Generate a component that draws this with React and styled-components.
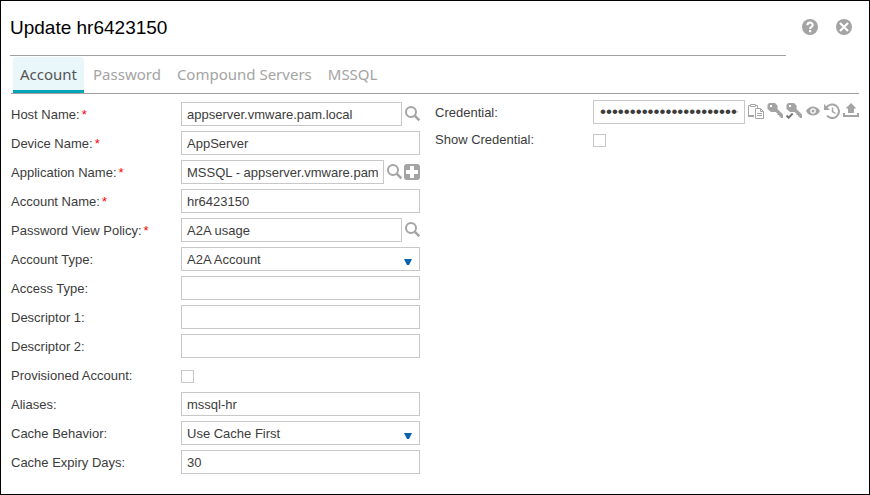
import React from "react";
import styled, { createGlobalStyle } from "styled-components";

const GlobalStyle = createGlobalStyle`
  *, *::before, *::after { box-sizing: border-box; }
  body {
    margin: 0;
    background: #fff;
    color: #3c3c3c;
    font: 13px/16px "Liberation Sans", Arial, sans-serif;
  }
`;

const ICON = "#a4a4a4";

const Dialog = styled.main`
  min-height: 100vh;
  padding: 0 10px 20px;
  border: 1px solid #000;
`;

const Header = styled.header`
  display: flex;
  justify-content: space-between;
  height: 55px;
`;

const Title = styled.h1`
  flex: 1;
  margin: 0 0 0 -1px;
  padding-top: 15px;
  border-bottom: 1px solid #a0a0a0;
  color: #000;
  font-size: 19px;
  font-weight: 400;
  line-height: 24px;
`;

const HeaderActions = styled.div`
  display: flex;
  gap: 18px;
  padding: 18px 7px 0 16px;
`;

const IconButton = styled.button`
  display: block;
  flex: none;
  width: 16px;
  height: 16px;
  padding: 0;
  border: 0;
  background: none;
  color: ${ICON};
  cursor: pointer;

  svg { display: block; }
`;

const Tabs = styled.div`
  display: flex;
  gap: 2px;
  height: 38px;
  padding: 1px 2px 0;
  border-bottom: 1px solid #a0a0a0;
`;

const Tab = styled.button`
  padding: 1px 7px 0;
  border: 0;
  border-bottom: 3px solid ${(p) => (p.$active ? "#00a5b8" : "transparent")};
  border-radius: 3px 3px 0 0;
  background: ${(p) => (p.$active ? "#e9f7fa" : "transparent")};
  color: ${(p) => (p.$active ? "#555" : "#a4a4a4")};
  font: 15px/22px "Noto Sans", "Open Sans", sans-serif;
  cursor: pointer;
`;

const Form = styled.form`
  display: grid;
  grid-template-columns: minmax(0, 409fr) minmax(0, 424fr);
  column-gap: 15px;
`;

const Column = styled.div`
  display: flex;
  flex-direction: column;
  gap: ${(p) => p.$gap}px;
  padding-top: ${(p) => p.$top}px;
`;

const Row = styled.div`
  display: grid;
  grid-template-columns: ${(p) => p.$label}px minmax(0, 1fr);
  align-items: center;
  height: 24px;
`;

const Label = styled.label`
  padding-top: 2px;
  white-space: nowrap;
`;

const Required = styled.span`
  margin-left: 2px;
  color: #f00;
`;

const Field = styled.div`
  display: flex;
  align-items: center;
  gap: 2px;
`;

const TextInput = styled.input`
  flex: 1;
  min-width: 0;
  height: 24px;
  padding: 0 5px;
  border: 1px solid #c8c8c8;
  border-radius: 0;
  background: #fff;
  color: #3c3c3c;
  font: inherit;

  &[type="password"] { padding: 0 6px; font-size: 17px; }
`;

const SelectBox = styled.div`
  position: relative;
  flex: 1;

  svg {
    position: absolute;
    right: 8px;
    top: 12px;
    pointer-events: none;
  }
`;

const Select = styled.select`
  display: block;
  width: 100%;
  height: 24px;
  padding: 2px 24px 0 5px;
  border: 1px solid #c8c8c8;
  border-radius: 0;
  appearance: none;
  background: #fff;
  color: #3c3c3c;
  font: inherit;
`;

const Checkbox = styled.input`
  appearance: none;
  width: 13px;
  height: 13px;
  margin: 2px 0 0;
  border: 1px solid #c8c8c8;
  background: #fff;

  &:checked { background: #00a5b8; }
`;

const Tools = styled.div`
  display: flex;
  gap: 3px;
  margin-left: 1px;
  margin-bottom: 2px;
`;

const Svg = ({ children }) => (
  <svg width="16" height="16" viewBox="0 0 16 16" fill="none" aria-hidden="true">
    {children}
  </svg>
);

const HelpIcon = () => (
  <Svg>
    <circle cx="8" cy="8" r="8" fill="currentColor" />
    <path d="M5.400 6.300C5.400 2.700 10.700 2.800 10.700 6c0 2-2.600 1.900-2.600 4" stroke="#fff" strokeWidth="2.100" />
    <path d="M7 11h2.200v2.200H7z" fill="#fff" />
  </Svg>
);

const CloseIcon = () => (
  <Svg>
    <circle cx="8" cy="8" r="8" fill="currentColor" />
    <path d="M4 4l8 8M12 4l-8 8" stroke="#fff" strokeWidth="2.200" />
  </Svg>
);

const SearchIcon = () => (
  <Svg>
    <circle cx="7" cy="6" r="5" stroke="currentColor" strokeWidth="2" />
    <path d="M10.700 9.700l4.600 4.600" stroke="currentColor" strokeWidth="2.400" />
  </Svg>
);

const PlusIcon = () => (
  <Svg>
    <rect width="16" height="16" rx="3" fill="currentColor" />
    <path d="M6 2h4v4h4v4h-4v4H6v-4H2V6h4z" fill="#fff" />
  </Svg>
);

const PasteIcon = () => (
  <Svg>
    <path d="M6 13H.5V2.5h9V5" stroke="currentColor" />
    <path d="M0 12h6v2H0z" fill="currentColor" />
    <path d="M2.500 1.500h5v2h-5z" fill="#fff" stroke="currentColor" />
    <path d="M7.500 5.500h5l3 3v7h-8z" fill="#fff" stroke="currentColor" />
    <path d="M12.500 5.500v3h3M9 10.500h5M9 12.500h5" stroke="currentColor" />
  </Svg>
);

const KeyShape = () => (
  <>
    <path
      d="M2 0h6l2.500 2.500v3.500L16 11.500V15h-2.500v-1.500H12V12h-1.500v-1.500L8.500 9H4L.5 6V2z"
      fill="currentColor"
    />
    <path d="M3 2h2v2H3z" fill="#fff" />
  </>
);

const KeyIcon = () => (
  <Svg>
    <KeyShape />
  </Svg>
);

const KeyCheckIcon = () => (
  <Svg>
    <KeyShape />
    <path d="M.5 12.500l2.200 2.200 4-4.200" stroke="#777" strokeWidth="2" />
  </Svg>
);

const EyeIcon = () => (
  <Svg>
    <path d="M1 8C4 2 12 2 15 8 12 14 4 14 1 8z" fill="currentColor" />
    <circle cx="8" cy="8" r="2.800" fill="#fff" />
    <circle cx="8" cy="8" r="1.500" fill="currentColor" />
  </Svg>
);

const HistoryIcon = () => (
  <Svg>
    <path d="M2.200 5A6.800 6.800 0 1 1 3 12.700" stroke="currentColor" strokeWidth="2" />
    <path d="M0 1v6h6z" fill="currentColor" />
    <path d="M8.500 4.500v4l3 2" stroke="currentColor" strokeWidth="1.500" />
  </Svg>
);

const UploadIcon = () => (
  <Svg>
    <path d="M8 0l5.500 5.500H11V10H5V5.500H2.500z" fill="currentColor" />
    <path d="M1 10v3h14v-3" stroke="currentColor" strokeWidth="2" />
  </Svg>
);

const Arrow = () => (
  <svg width="8" height="6" viewBox="0 0 8 6" aria-hidden="true">
    <path d="M0 0h8L5 6H3z" fill="#0863b0" />
  </svg>
);

const icons = {
  search: ["Search", SearchIcon],
  add: ["Add", PlusIcon],
};

const accountFields = [
  { id: "host", label: "Host Name:", required: true, value: "appserver.vmware.pam.local", actions: ["search"] },
  { id: "device", label: "Device Name:", required: true, value: "AppServer" },
  { id: "application", label: "Application Name:", required: true, value: "MSSQL - appserver.vmware.pam", actions: ["search", "add"] },
  { id: "account", label: "Account Name:", required: true, value: "hr6423150" },
  { id: "policy", label: "Password View Policy:", required: true, value: "A2A usage", actions: ["search"] },
  { id: "accountType", label: "Account Type:", kind: "select", value: "A2A Account" },
  { id: "accessType", label: "Access Type:", value: "" },
  { id: "descriptor1", label: "Descriptor 1:", value: "" },
  { id: "descriptor2", label: "Descriptor 2:", value: "" },
  { id: "provisioned", label: "Provisioned Account:", kind: "checkbox" },
  { id: "aliases", label: "Aliases:", value: "mssql-hr" },
  { id: "cache", label: "Cache Behavior:", kind: "select", value: "Use Cache First" },
  { id: "expiry", label: "Cache Expiry Days:", value: "30" },
];

const tools = [
  ["Copy credential", PasteIcon],
  ["Generate credential", KeyIcon],
  ["Verify credential", KeyCheckIcon],
  ["View credential", EyeIcon],
  ["Credential history", HistoryIcon],
  ["Upload credential", UploadIcon],
];

const tabs = ["Account", "Password", "Compound Servers", "MSSQL"];

function Control({ id, kind, value }) {
  if (kind === "checkbox") return <Checkbox id={id} type="checkbox" />;
  if (kind === "select") {
    return (
      <SelectBox>
        <Select id={id} defaultValue={value}>
          <option>{value}</option>
        </Select>
        <Arrow />
      </SelectBox>
    );
  }
  return <TextInput id={id} type="text" defaultValue={value} />;
}

export default function App() {
  return (
    <>
      <GlobalStyle />
      <Dialog>
        <Header>
          <Title>Update hr6423150</Title>
          <HeaderActions>
            <IconButton type="button" aria-label="Help"><HelpIcon /></IconButton>
            <IconButton type="button" aria-label="Close"><CloseIcon /></IconButton>
          </HeaderActions>
        </Header>
        <Tabs role="tablist">
          {tabs.map((name, i) => (
            <Tab key={name} type="button" role="tab" aria-selected={i === 0} $active={i === 0}>
              {name}
            </Tab>
          ))}
        </Tabs>
        <Form>
          <Column $gap={5} $top={8}>
            {accountFields.map((f) => (
              <Row key={f.id} $label={170}>
                <Label htmlFor={f.id}>
                  {f.label}
                  {f.required && <Required>*</Required>}
                </Label>
                <Field>
                  <Control {...f} />
                  {(f.actions || []).map((name) => {
                    const [label, Icon] = icons[name];
                    return (
                      <IconButton key={name} type="button" aria-label={label}><Icon /></IconButton>
                    );
                  })}
                </Field>
              </Row>
            ))}
          </Column>
          <Column $gap={3} $top={6}>
            <Row $label={158}>
              <Label htmlFor="credential">Credential:</Label>
              <Field>
                <TextInput id="credential" type="password" defaultValue="00000000000000000000000000000000" />
                <Tools>
                  {tools.map(([label, Icon]) => (
                    <IconButton key={label} type="button" aria-label={label}><Icon /></IconButton>
                  ))}
                </Tools>
              </Field>
            </Row>
            <Row $label={158}>
              <Label htmlFor="showCredential">Show Credential:</Label>
              <Field><Checkbox id="showCredential" type="checkbox" /></Field>
            </Row>
          </Column>
        </Form>
      </Dialog>
    </>
  );
}
